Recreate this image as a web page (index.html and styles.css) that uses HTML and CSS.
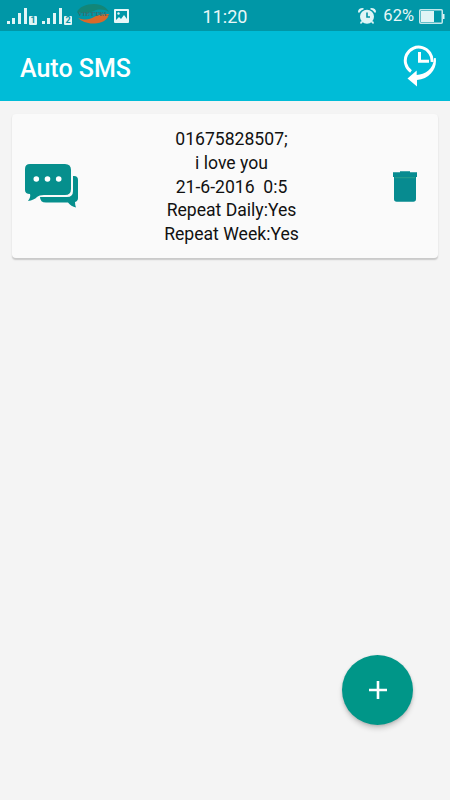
FILE: index.html
```html
<!DOCTYPE html>
<html lang="en">
<head>
<meta charset="utf-8">
<title>Auto SMS</title>
<link rel="stylesheet" href="styles.css">
</head>
<body>
<div class="status">
  <div class="status-left">
    <svg class="signal" width="23" height="18" viewBox="0 0 23 18"><path d="M1 14h3v3H1zM6 11h3v6H6zM12 6h3v11h-3zM18 1h3v16h-3z"/></svg>
    <span class="sim sim-one">1</span>
    <svg class="signal" width="23" height="18" viewBox="0 0 23 18"><path d="M1 14h3v3H1zM6 11h3v6H6zM12 6h3v11h-3zM18 1h3v16h-3z"/></svg>
    <span class="sim">2</span>
    <span class="carrier">
      <svg width="34" height="20" viewBox="0 0 34 20"><path fill="#138678" d="M1 8C3 3 10 0 18 0c8 .3 13 4 15 8-5-3-11-3-15-1-5 2-9 3-17 1z"/><path fill="#d86a2b" d="M33 10c-1 6-8 10-16 9.500C11 19.500 5 17 2 14c8 3 12 1 16-1s8-3 15-3z"/></svg>
      <span>VIETTEL</span>
    </span>
    <svg class="photo" width="15" height="14" viewBox="0 0 15 14"><path fill="#e8f7f8" fill-rule="evenodd" d="M1 0h13q1 0 1 1v12q0 1-1 1H1q-1 0-1-1V1q0-1 1-1zm1 2v9l3-3 2 2 3-4 3 4V2z"/><circle cx="4.500" cy="4.500" r="1.200" fill="#e8f7f8"/></svg>
  </div>
  <div class="clock">11:20</div>
  <div class="status-right">
    <svg width="18" height="18" viewBox="0 0 18 18"><g fill="#e0f5f6"><circle cx="9" cy="9.700" r="7"/><path d="M0 5Q0 1 5 1L6 2Q3 3 1 6zM18 5q0-4-5-4l-1 1q3 1 5 4z"/><path d="M3 14l2 1-2 2-1-1zM15 14l-2 1 2 2 1-1z"/></g><path d="M9 5.500V10h3" fill="none" stroke="#0494a5" stroke-width="1.600"/></svg>
    <span class="percent">62%</span>
    <svg class="battery" width="26" height="15" viewBox="0 0 26 15"><rect x=".75" y=".75" width="22.500" height="13.500" rx="1" fill="none" stroke="#c3e8eb" stroke-width="1.500"/><path fill="#e0f5f6" d="M2 2h13v11H2zM24 5h1.500v5H24z"/></svg>
  </div>
</div>
<header class="appbar">
  <h1>Auto SMS</h1>
  <svg width="34" height="42" viewBox="0 0 34 42"><g fill="none" stroke="#fff" stroke-width="3"><path d="M8 26.500A13.400 13.400 0 1 1 29 17"/><path d="M16.500 7v9.300h9.500"/></g><path fill="#fff" d="M31.200 13h1.500C34.500 23 27 34 14 35v6.500L4.500 33.500 13.700 25.500v4.500C22 29.500 30 25 31.200 13z"/></svg>
</header>
<main>
  <section class="card">
    <svg class="chat" width="54" height="44" viewBox="0 0 54 44"><g fill="#068f8d"><path d="M5 0h35q6 0 6 6v19q0 6-6 6H19q-5 0-7 2-3 3-9 4 3-4 2-7Q0 30 0 26V5q0-5 5-5z"/><path d="M48 12h1q4 0 4 4v18q0 3-3 4 0 3 1 5.500q-5-1-8-5H21q-6 0-6-5.500h27q6 0 6-6z"/></g><g fill="#fff"><circle cx="11.300" cy="15" r="2.800"/><circle cx="22.500" cy="15" r="2.800"/><circle cx="33.700" cy="15" r="2.800"/></g></svg>
    <div class="message">
      <div>01675828507;</div>
      <div>i love you</div>
      <div class="date">21-6-2016  0:5</div>
      <div>Repeat Daily:Yes</div>
      <div>Repeat Week:Yes</div>
    </div>
    <svg class="trash" width="24" height="31" viewBox="0 0 24 31"><path fill="#078b90" d="M7 .3h10v.9h7V6h-1v22q0 2.700-2.700 2.700H3.700Q1 30.700 1 28V6H0V1.200h7z"/><path fill="#219b8d" d="M2 6h20v1.300H2z"/></svg>
  </section>
</main>
<button class="fab" aria-label="Add"><svg width="18" height="18" viewBox="0 0 18 18"><path d="M9 0v18M0 9h18" stroke="#fff" stroke-width="2.600"/></svg></button>
</body>
</html>
```
FILE: styles.css
```css
* { box-sizing: border-box; }
body { margin: 0; height: 800px; background: #f4f4f4; font-family: Roboto, sans-serif; overflow: hidden; }
svg { display: block; flex: none; }
.status { height: 31px; background: #0097a7; display: grid; grid-template-columns: 190px 1fr 190px; align-items: center; color: #e8f7f8; }
.status-left { display: flex; align-items: center; height: 31px; padding-left: 6px; }
.signal { fill: #e0f5f6; }
.sim { width: 8px; height: 9px; margin-top: 9px; background: #e0f5f6; color: #0494a5; font-size: 9px; line-height: 9px; font-weight: 700; text-align: center; border-radius: 1px; }
.sim-one { margin-right: 4px; }
.carrier { position: relative; width: 34px; margin-left: 4px; margin-top: -4px; }
.carrier span { position: absolute; left: 0; top: 6px; width: 34px; text-align: center; color: #396e70; font: 700 7px/9px "Liberation Serif", serif; }
.photo { margin-left: 4px; }
.clock { text-align: center; font-size: 18px; padding-top: 2px; }
.status-right { display: flex; align-items: center; justify-content: flex-end; padding-right: 5px; }
.percent { font-size: 16.500px; margin: 0 5px 0 7px; }
.battery { margin-top: 1px; }
.appbar { height: 70px; background: #00bcd7; display: flex; align-items: center; justify-content: space-between; padding: 0 13px 0 20px; }
h1 { margin: 5px 0 0; color: #fff; font-size: 25px; line-height: 30px; font-weight: 500; }
main { padding: 13px 12px; }
.card { height: 144px; background: #fafafa; border-radius: 4px; box-shadow: 0 1.500px 1.500px rgba(0,0,0,.18); display: grid; grid-template-columns: 54px 1fr 24px; align-items: center; padding: 0 21px 0 13px; }
.message { color: #111; font-size: 17.600px; line-height: 23.800px; text-align: center; margin-left: -9px; padding-top: 3px; }
.date { white-space: pre; }
.trash { margin-top: 1px; }
.fab { position: absolute; left: 342px; top: 655px; width: 71px; height: 70px; border: 0; border-radius: 50%; background: #009688; display: grid; place-items: center; padding: 0; box-shadow: 0 4px 5px rgba(0,0,0,.15), 0 1px 3px rgba(0,0,0,.15); }
```
